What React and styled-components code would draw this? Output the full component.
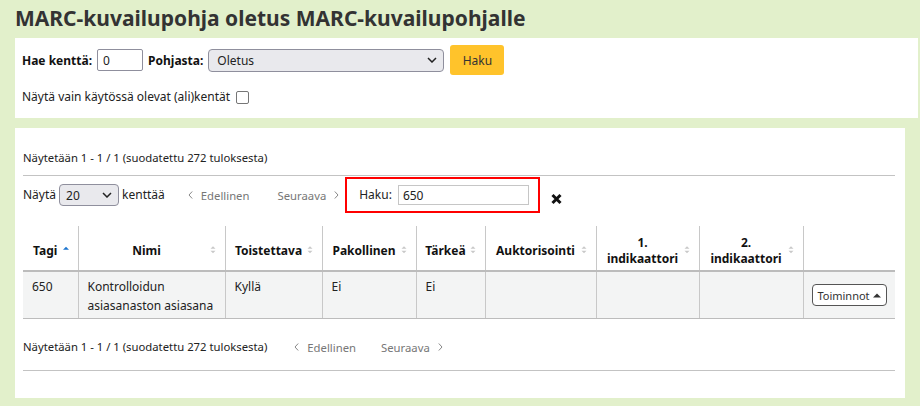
import React from "react";
import styled, { createGlobalStyle } from "styled-components";

const Global = createGlobalStyle`
  html, body { margin: 0; padding: 0; }
  body {
    background: #e2f0cb;
    font-family: "Noto Sans", "Open Sans", sans-serif;
    font-size: 12px;
    color: #222;
    width: 920px;
    height: 406px;
    overflow: hidden;
  }
  * { box-sizing: border-box; }
`;

const Page = styled.div`
  display: flex;
  flex-direction: column;
  padding-left: 15px;
`;

const Title = styled.h1`
  margin: 0;
  height: 38px;
  padding-top: 4px;
  font-size: 21px;
  line-height: 28px;
  font-weight: 700;
  color: #333;
  white-space: nowrap;
`;

const Panel = styled.section`
  background: #fff;
  width: ${(p) => p.$width}px;
  padding: ${(p) => p.$pad};
  margin-top: ${(p) => p.$mt || 0}px;
  display: flex;
  flex-direction: column;
`;

const Row = styled.div`
  display: flex;
  align-items: center;
  gap: ${(p) => p.$gap ?? 4}px;
  margin-top: ${(p) => p.$mt || 0}px;
  height: ${(p) => (p.$h ? p.$h + "px" : "auto")};
`;

const Bold = styled.label`
  font-weight: 700;
  font-size: 12px;
  color: #111;
`;

const Text = styled.span`
  font-size: ${(p) => p.$size || 12}px;
  color: #222;
  line-height: 18px;
  white-space: nowrap;
`;

const TextInput = styled.div`
  width: ${(p) => p.$w}px;
  height: ${(p) => p.$hgt || 22}px;
  border: 1px solid ${(p) => p.$border || "#8f8f9d"};
  border-radius: ${(p) => p.$r ?? 2}px;
  background: #fff;
  padding-left: 5px;
  display: flex;
  align-items: center;
  font-size: 12px;
  color: #222;
`;

const Select = styled.div`
  width: ${(p) => p.$w}px;
  height: ${(p) => p.$hgt || 23}px;
  border: 1px solid #8f8f9d;
  border-radius: 4px;
  background: #e9e9ed;
  padding: 0 6px 0 ${(p) => p.$pl || 8}px;
  display: flex;
  align-items: center;
  justify-content: space-between;
  font-size: 12px;
  color: #222;
`;

const Chevron = () => (
  <svg width="10" height="6" viewBox="0 0 10 6">
    <path d="M1 1l4 4 4-4" fill="none" stroke="#222" strokeWidth="1.5" />
  </svg>
);

const YellowButton = styled.button`
  width: 54px;
  height: 30px;
  margin-left: 1px;
  border: none;
  border-radius: 3px;
  background: #ffc32b;
  color: #333;
  font-family: inherit;
  font-size: 12px;
  padding: 0;
`;

const Checkbox = styled.span`
  display: inline-block;
  width: 13px;
  height: 13px;
  border: 1.5px solid #767676;
  border-radius: 2px;
  margin-left: 6px;
`;

const InfoText = styled.div`
  font-size: 11.3px;
  line-height: 18px;
  color: #222;
  white-space: nowrap;
`;

const Rule = styled.div`
  height: 1px;
  background: #c3c3c3;
  width: 872px;
  margin-top: ${(p) => p.$mt}px;
`;

const PageLink = styled.span`
  color: #777;
  font-size: 11.3px;
  margin-left: ${(p) => p.$ml || 0}px;
  display: inline-flex;
  align-items: center;
  gap: 8px;
  white-space: nowrap;
`;

const Angle = ({ dir }) => (
  <svg width="5" height="8" viewBox="0 0 5 8">
    <path
      d={dir === "left" ? "M4.2 0.5L1 4l3.2 3.5" : "M0.8 0.5L4 4 0.8 7.5"}
      fill="none"
      stroke="#888"
      strokeWidth="1"
    />
  </svg>
);

const FilterBox = styled.div`
  width: 195px;
  height: 36px;
  border: 2px solid #f00;
  margin-left: ${(p) => p.$ml || 0}px;
  display: flex;
  align-items: center;
  padding: 0 9px 0 12px;
  gap: 6px;
`;

const FilterInput = styled.div`
  flex: 1;
  height: 20px;
  border: 1px solid #c6c6c6;
  background: #fff;
  padding-left: 4px;
  display: flex;
  align-items: center;
  font-size: 12px;
  color: #222;
`;

const ClearIcon = () => (
  <svg width="11" height="12" viewBox="0 0 11 12" style={{ marginLeft: 8, marginTop: 7 }}>
    <path d="M1.5 2l8 8M9.5 2l-8 8" stroke="#111" strokeWidth="3" strokeLinecap="butt" />
  </svg>
);

const Table = styled.table`
  margin-top: 13px;
  width: 872px;
  border-collapse: collapse;
  table-layout: fixed;
`;

const Th = styled.th`
  position: relative;
  height: 44px;
  padding: 9px 18px 3px 8px;
  font-size: 12px;
  line-height: 16px;
  font-weight: 700;
  color: #111;
  text-align: center;
  vertical-align: middle;
  border-left: ${(p) => (p.$first ? "none" : "1px solid #c8c8c8")};
  border-bottom: 2px solid #bcbcbc;
`;

const Td = styled.td`
  background: #f3f4f4;
  padding: 5px 9px 3px 9px;
  font-size: 12px;
  line-height: 19px;
  color: #222;
  text-align: left;
  vertical-align: top;
  height: 46px;
  border-left: ${(p) => (p.$first ? "none" : "1px solid #c8c8c8")};
  border-bottom: 1px solid #bcbcbc;
`;

const TdAction = styled(Td)`
  vertical-align: middle;
  padding: 0 8px;
`;

const SortWrap = styled.span`
  position: absolute;
  right: ${(p) => p.$right || 9}px;
  top: 50%;
  transform: translateY(-30%);
  display: flex;
`;

const SortIcon = ({ active }) => (
  <svg width="6" height="9" viewBox="0 0 6 9">
    {active ? (
      <path d="M0 4.5L3 1.5 6 4.5z" fill="#1c75cf" />
    ) : (
      <>
        <path d="M0.5 3.5L3 1 5.5 3.5z" fill="#c9c9c9" />
        <path d="M0.5 5.5L3 8 5.5 5.5z" fill="#c9c9c9" />
      </>
    )}
  </svg>
);

const ActionButton = styled.button`
  height: 22px;
  width: 75px;
  border: 1px solid #555;
  border-radius: 4px;
  background: #fff;
  font-family: inherit;
  font-size: 11px;
  color: #333;
  padding: 0;
  display: flex;
  align-items: center;
  justify-content: center;
  gap: 3px;
  white-space: nowrap;
`;

const Caret = () => (
  <svg width="8" height="5" viewBox="0 0 8 5">
    <path d="M0 4.5L4 0.5 8 4.5z" fill="#333" />
  </svg>
);

const columns = [
  { label: "Tagi", w: 55, active: true, right: 9 },
  { label: "Nimi", w: 147 },
  { label: "Toistettava", w: 97 },
  { label: "Pakollinen", w: 94 },
  { label: "Tärkeä", w: 69 },
  { label: "Auktorisointi", w: 111 },
  { label: ["1.", "indikaattori"], w: 103 },
  { label: ["2.", "indikaattori"], w: 104 },
  { label: "", w: 92, nosort: true },
];

const rowData = ["650", "Kontrolloidun asiasanaston asiasana", "Kyllä", "Ei", "Ei", "", "", ""];

function Pager({ first }) {
  return (
    <>
      <PageLink $ml={first}>
        <Angle dir="left" />
        Edellinen
      </PageLink>
      <PageLink $ml={25}>
        Seuraava
        <Angle dir="right" />
      </PageLink>
    </>
  );
}

export default function App() {
  return (
    <>
      <Global />
      <Page>
        <Title>MARC-kuvailupohja oletus MARC-kuvailupohjalle</Title>
        <Panel $width={903} $pad="7px 7px 12px 7px">
          <Row $h={30} $gap={5}>
            <Bold>Hae kenttä:</Bold>
            <TextInput $w={46}>0</TextInput>
            <Bold>Pohjasta:</Bold>
            <Select $w={236}>
              <span>Oletus</span>
              <Chevron />
            </Select>
            <YellowButton>Haku</YellowButton>
          </Row>
          <Row $mt={13} $h={18} $gap={0}>
            <Text>Näytä vain käytössä olevat (ali)kentät</Text>
            <Checkbox />
          </Row>
        </Panel>
        <Panel $width={890} $pad="21px 8px 27px 8px" $mt={10}>
          <InfoText>Näytetään 1 - 1 / 1 (suodatettu 272 tuloksesta)</InfoText>
          <Rule $mt={8} />
          <Row $mt={1} $h={36} $gap={3}>
            <Text>Näytä</Text>
            <Select $w={60} $hgt={22} $pl={6}>
              <span>20</span>
              <Chevron />
            </Select>
            <Text>kenttää</Text>
            <Pager first={20} />
            <FilterBox $ml={3}>
              <Text>Haku:</Text>
              <FilterInput>650</FilterInput>
            </FilterBox>
            <ClearIcon />
          </Row>
          <Table>
            <colgroup>
              {columns.map((c, i) => (
                <col key={i} style={{ width: c.w }} />
              ))}
            </colgroup>
            <thead>
              <tr>
                {columns.map((c, i) => (
                  <Th key={i} $first={i === 0}>
                    {Array.isArray(c.label) ? (
                      <>
                        {c.label[0]}
                        <br />
                        {c.label[1]}
                      </>
                    ) : (
                      c.label
                    )}
                    {!c.nosort && (
                      <SortWrap $right={c.right}>
                        <SortIcon active={c.active} />
                      </SortWrap>
                    )}
                  </Th>
                ))}
              </tr>
            </thead>
            <tbody>
              <tr>
                {rowData.map((d, i) => (
                  <Td key={i} $first={i === 0}>
                    {d}
                  </Td>
                ))}
                <TdAction>
                  <ActionButton>
                    Toiminnot
                    <Caret />
                  </ActionButton>
                </TdAction>
              </tr>
            </tbody>
          </Table>
          <Row $mt={19} $h={18} $gap={0}>
            <InfoText>Näytetään 1 - 1 / 1 (suodatettu 272 tuloksesta)</InfoText>
            <Pager first={27} />
          </Row>
          <Rule $mt={14} />
        </Panel>
      </Page>
    </>
  );
}
